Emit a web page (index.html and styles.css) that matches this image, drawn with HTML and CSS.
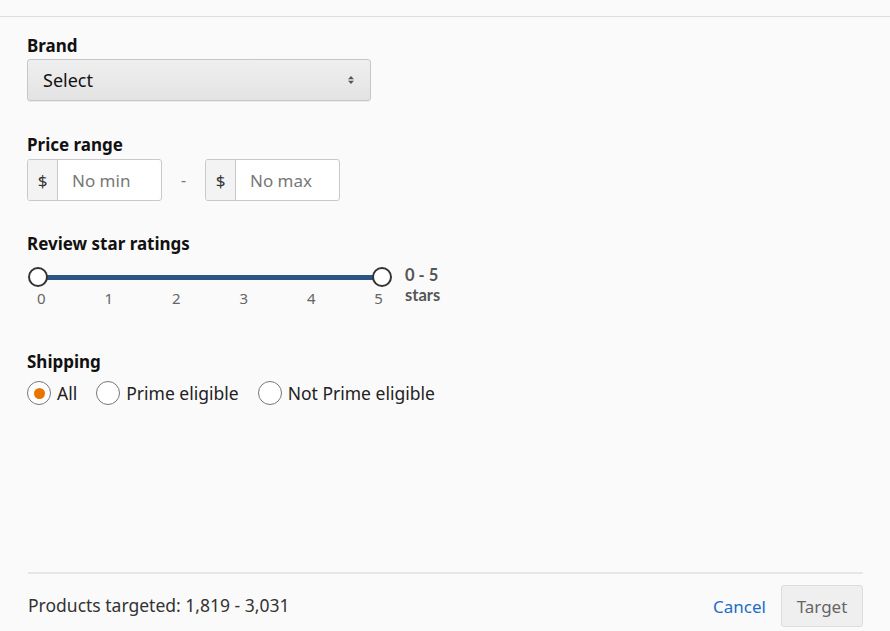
FILE: index.html
```html
<!DOCTYPE html>
<html>
<head>
<meta charset="utf-8">
<link rel="stylesheet" href="styles.css">
</head>
<body>
<div class="page">
  <div class="top-rule"></div>
  <div class="content">
    <section class="field brand">
      <div class="label">Brand</div>
      <div class="select">
        <span>Select</span>
        <svg class="caret" width="8" height="10" viewBox="0 0 8 10"><path d="M4 1 L7 4.2 H1 Z M4 9 L7 5.8 H1 Z" fill="#555"/></svg>
      </div>
    </section>
    <section class="field price">
      <div class="label">Price range</div>
      <div class="price-row">
        <div class="money"><span class="addon">$</span><span class="ph">No min</span></div>
        <span class="dash">-</span>
        <div class="money"><span class="addon">$</span><span class="ph">No max</span></div>
      </div>
    </section>
    <section class="field stars">
      <div class="label">Review star ratings</div>
      <div class="slider-row">
        <div class="slider">
          <div class="track"><span class="knob knob-l"></span><span class="knob knob-r"></span></div>
          <div class="ticks"><span>0</span><span>1</span><span>2</span><span>3</span><span>4</span><span>5</span></div>
        </div>
        <div class="range-val"><div>0 - 5</div><div>stars</div></div>
      </div>
    </section>
    <section class="field shipping">
      <div class="label">Shipping</div>
      <div class="radios">
        <label class="radio on"><span class="dot"></span>All</label>
        <label class="radio"><span class="dot"></span>Prime eligible</label>
        <label class="radio"><span class="dot"></span>Not Prime eligible</label>
      </div>
    </section>
  </div>
  <footer class="footer">
    <span class="count">Products targeted: 1,819 - 3,031</span>
    <div class="actions">
      <span class="cancel">Cancel</span>
      <span class="target">Target</span>
    </div>
  </footer>
</div>
</body>
</html>
```
FILE: styles.css
```css
html, body { margin: 0; padding: 0; }
body {
  background: #fafafa;
  font-family: "Noto Sans", "Open Sans", sans-serif;
  color: #111;
  width: 890px;
  height: 631px;
  overflow: hidden;
}
.page { height: 631px; display: flex; flex-direction: column; }
.top-rule { height: 1px; background: #dedede; margin-top: 16px; }
.content { padding: 18px 0 0 27px; flex: 1; }
.label { font-weight: 700; font-size: 17px; line-height: 22px; color: #111; }
.field.brand .label { margin-bottom: 2px; }
.select {
  display: flex; align-items: center; justify-content: space-between;
  padding: 0 15px; box-sizing: border-box; width: 344px; height: 42px;
  border: 1px solid #c6c6c6; border-radius: 3px;
  background: linear-gradient(#efefef, #e3e3e3);
  font-size: 18px; color: #111;
  box-shadow: 0 1px 0 rgba(0,0,0,0.06);
}
.field.price { margin-top: 33px; }
.field.price .label { margin-bottom: 3px; }
.price-row { display: flex; align-items: center; }
.money {
  display: flex; width: 135px; height: 42px; box-sizing: border-box;
  border: 1px solid #c9c9c9; border-radius: 3px; background: #fff; overflow: hidden;
}
.addon {
  width: 29px; background: #f3f3f3; border-right: 1px solid #c9c9c9;
  display: flex; align-items: center; justify-content: center; font-size: 17px; color: #333;
}
.ph { display: flex; align-items: center; padding-left: 14px; font-size: 17px; color: #777; }
.dash { width: 43px; text-align: center; color: #777; font-size: 16px; }
.field.stars { margin-top: 32px; }
.slider-row { display: flex; margin-top: 12px; }
.slider { width: 366px; }
.track {
  position: relative; margin: 8px 11px 0; height: 5px; background: #2b5487;
}
.knob {
  position: absolute; top: -8px; width: 20px; height: 20px; box-sizing: border-box;
  border: 2px solid #333; border-radius: 50%; background: #fff;
}
.knob-l { left: -10px; }
.knob-r { right: -10px; }
.ticks {
  display: flex; justify-content: space-between; margin-top: 8px; padding: 0 10px 0 10px;
  font-size: 15px; color: #666; line-height: 20px;
}
.range-val {
  margin-left: 12px; margin-top: -1px;
  font-family: Lato, "Noto Sans", sans-serif; font-weight: 700; font-size: 16.5px; line-height: 19.5px; color: #555;
}
.field.shipping { margin-top: 43px; }
.radios { display: flex; align-items: center; margin-top: 8px; font-size: 17.5px; color: #222; }
.radio { display: flex; align-items: center; margin-right: 19px; }
.dot {
  width: 24px; height: 24px; box-sizing: border-box; border: 1px solid #777;
  border-radius: 50%; background: #fff; margin-right: 6px; position: relative;
}
.radio.on .dot::after {
  content: ""; position: absolute; left: 5.5px; top: 5.5px; width: 11px; height: 11px;
  border-radius: 50%; background: #e77600;
}
.footer {
  margin: 0 27px 0 28px; border-top: 2px solid #e6e6e6;
  display: flex; align-items: flex-start; justify-content: space-between;
  box-sizing: content-box; padding-top: 11px; height: 46px;
}
.count { font-size: 17.5px; line-height: 40px; color: #333; }
.actions { display: flex; align-items: center; }
.cancel { color: #1a6ec7; font-size: 17px; margin-right: 15px; }
.target {
  width: 82px; height: 42px; box-sizing: border-box; border: 1px solid #dcdcdc; border-radius: 3px;
  background: #efefef; color: #666; font-size: 17px;
  display: flex; align-items: center; justify-content: center;
}
```
